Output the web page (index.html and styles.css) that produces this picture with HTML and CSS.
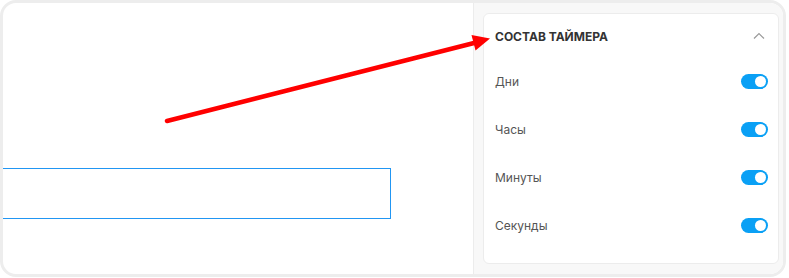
FILE: index.html
```html
<!DOCTYPE html>
<html lang="ru">
<head>
<meta charset="utf-8">
<link rel="stylesheet" href="styles.css">
</head>
<body>
<div class="frame">
  <main class="canvas">
    <div class="selection"></div>
    <svg class="arrow" width="789" height="278" viewBox="0 0 789 278">
      <line x1="167" y1="121" x2="476" y2="42.5" stroke="#ff0000" stroke-width="4.5" stroke-linecap="round"/>
      <polygon points="490,38.5 471.5,35 475.5,50.5" fill="#ff0000"/>
    </svg>
  </main>
  <aside class="sidebar">
    <section class="card">
      <header class="card-head">
        <span class="card-title">Состав таймера</span>
        <svg class="chevron" width="12" height="8" viewBox="0 0 12 8">
          <path d="M1 6.5 L6 1.5 L11 6.5" fill="none" stroke="#9a9a9a" stroke-width="1.2"/>
        </svg>
      </header>
      <div class="row"><span class="label">Дни</span><span class="toggle"></span></div>
      <div class="row"><span class="label">Часы</span><span class="toggle"></span></div>
      <div class="row"><span class="label">Минуты</span><span class="toggle"></span></div>
      <div class="row"><span class="label">Секунды</span><span class="toggle"></span></div>
    </section>
  </aside>
</div>
</body>
</html>
```
FILE: styles.css
```css
* { box-sizing: border-box; }
html, body { margin: 0; padding: 0; background: #ffffff; }
body {
  width: 789px;
  height: 278px;
  font-family: Inter, "Noto Sans", "Liberation Sans", sans-serif;
  overflow: hidden;
}
.frame {
  width: 786px;
  height: 277px;
  border: 3px solid #ededed;
  border-radius: 16px;
  display: flex;
  overflow: hidden;
  background: #ffffff;
}
.canvas {
  flex: 1;
  position: relative;
  padding-top: 165px;
}
.selection {
  margin-left: -4px;
  width: 392px;
  height: 51px;
  border: 1px solid #2196f3;
}
.arrow {
  position: absolute;
  left: -3px;
  top: -3px;
  pointer-events: none;
}
.sidebar {
  width: 310px;
  border-left: 1px solid #ececec;
  background: #f8f8f8;
  padding: 10px 4px 10px 9px;
  display: flex;
}
.card {
  flex: 1;
  background: #ffffff;
  border: 1px solid #ececec;
  border-radius: 6px;
  padding: 0 10px 0 11px;
}
.card-head {
  height: 43px;
  padding-top: 1px;
  display: flex;
  align-items: center;
  justify-content: space-between;
}
.card-title {
  font-size: 12px;
  font-weight: 700;
  text-transform: uppercase;
  color: #333333;
}
.chevron { margin-right: 3px; }
.row {
  height: 48px;
  display: flex;
  align-items: center;
  justify-content: space-between;
}
.label {
  font-size: 12px;
  color: #555555;
}
.toggle {
  width: 27px;
  height: 15px;
  border-radius: 8px;
  background: #0aa0f5;
  position: relative;
}
.toggle::after {
  content: "";
  position: absolute;
  right: 2px;
  top: 2px;
  width: 11px;
  height: 11px;
  border-radius: 50%;
  background: #ffffff;
}
```
